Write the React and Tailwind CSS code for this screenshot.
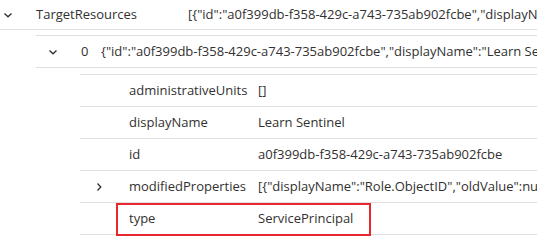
const font = { fontFamily: '"Open Sans", "Noto Sans", sans-serif' };

const ChevronDown = () => (
  <svg width="10" height="10" viewBox="0 0 10 10" className="shrink-0">
    <path d="M1.5 3.5 L5 6.8 L8.5 3.5" fill="none" stroke="#323130" strokeWidth="1.3" />
  </svg>
);

const ChevronRight = () => (
  <svg width="10" height="10" viewBox="0 0 10 10" className="shrink-0">
    <path d="M3.5 1.5 L6.8 5 L3.5 8.5" fill="none" stroke="#323130" strokeWidth="1.3" />
  </svg>
);

const targetValue =
  '[{"id":"a0f399db-f358-429c-a743-735ab902fcbe","displayName":"Learn Sentinel","type":"ServicePrincipal"}]';
const zeroValue =
  '{"id":"a0f399db-f358-429c-a743-735ab902fcbe","displayName":"Learn Sentinel","type":"ServicePrincipal"}';

const props = [
  { k: 'administrativeUnits', v: '[]' },
  { k: 'displayName', v: 'Learn Sentinel' },
  { k: 'id', v: 'a0f399db-f358-429c-a743-735ab902fcbe' },
  {
    k: 'modifiedProperties',
    v: '[{"displayName":"Role.ObjectID","oldValue":null,"newValue":"\\"a0f399db\\""}]',
    expand: true,
  },
  { k: 'type', v: 'ServicePrincipal', boxed: true },
];

export default function App() {
  return (
    <div
      className="w-[537px] h-[240px] bg-white overflow-hidden text-[13px] text-[#323130] whitespace-nowrap"
      style={font}
    >
      {/* top row */}
      <div className="flex items-center h-[30px] border-b border-[#e1dfdd]">
        <div className="w-[36px] shrink-0 flex pl-[3px]">
          <ChevronDown />
        </div>
        <div className="w-[152px] shrink-0">TargetResources</div>
        <div className="min-w-0 overflow-hidden">{targetValue}</div>
      </div>

      {/* item 0 */}
      <div className="ml-[36px] mt-[5px] border-t border-[#e1dfdd]">
        <div className="flex items-center h-[32px] border-b border-[#e1dfdd]">
          <div className="w-[45px] shrink-0 flex pl-[12px]">
            <ChevronDown />
          </div>
          <div className="w-[20px] shrink-0">0</div>
          <div className="min-w-0 overflow-hidden">{zeroValue}</div>
        </div>

        {/* properties of 0 */}
        <div className="ml-[44px] mt-[6px] border-t border-[#e1dfdd]">
          {props.map((p) => (
            <div
              key={p.k}
              className="relative flex items-center h-[32px] border-b border-[#e1dfdd]"
            >
              <div className="w-[49px] shrink-0 flex pl-[14px]">
                {p.expand && <ChevronRight />}
              </div>
              <div className="w-[129px] shrink-0">{p.k}</div>
              <div className="min-w-0 overflow-hidden">{p.v}</div>
              {p.boxed && (
                <div className="absolute left-[36px] top-0 w-[255px] h-[33px] border-2 border-[#e8262d]" />
              )}
            </div>
          ))}
        </div>
      </div>
    </div>
  );
}
